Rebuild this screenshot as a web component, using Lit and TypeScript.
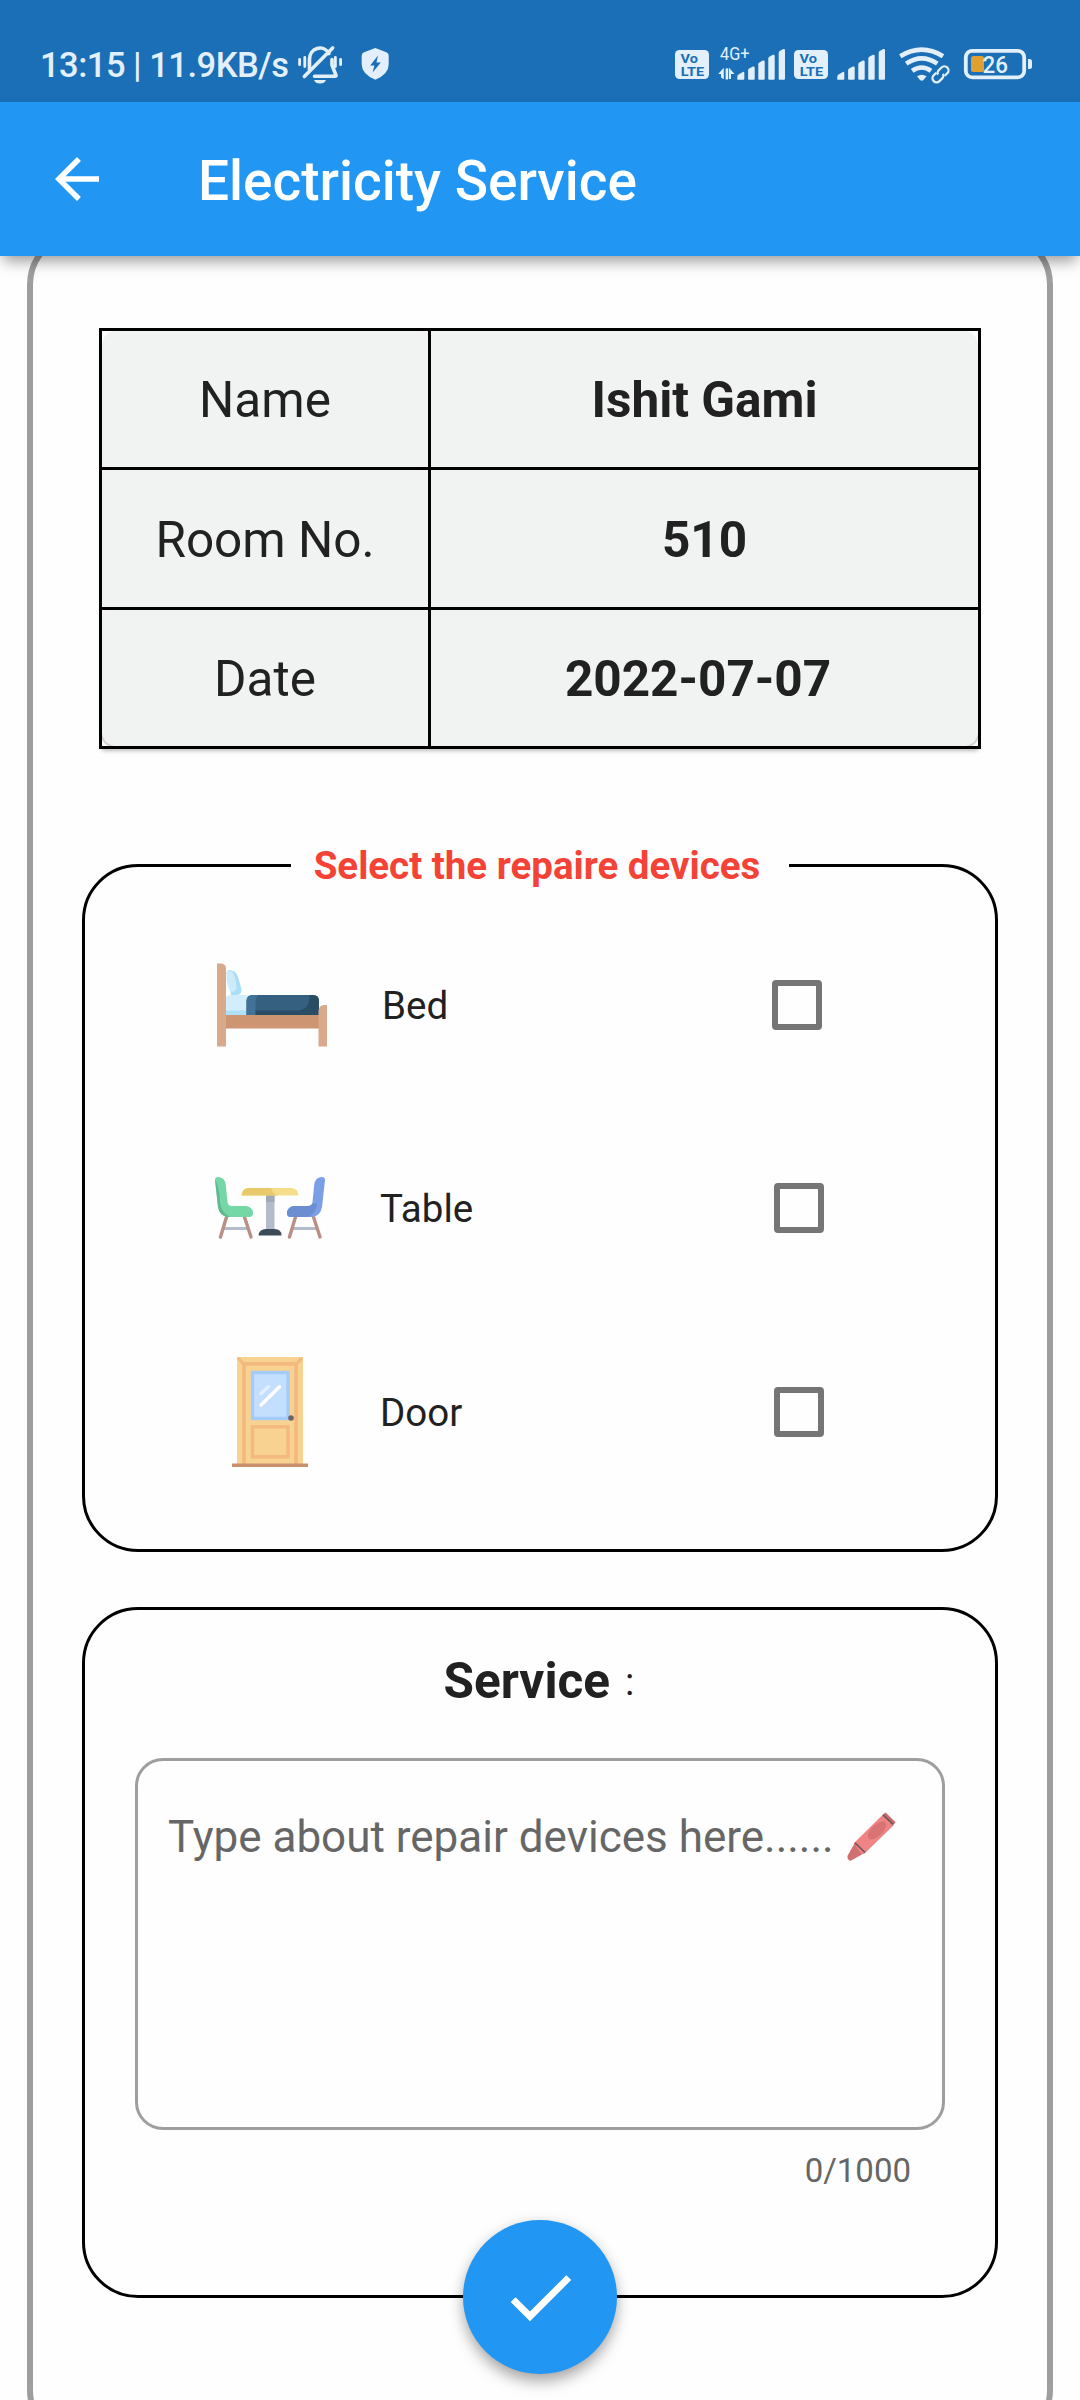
import { LitElement, html, css, svg, type TemplateResult } from "lit";
import { customElement, property } from "lit/decorators.js";

const bars = (x: number) => svg`
  <g fill="#e3effa" transform="translate(${x} 0)">
    <path d="M0 79.7V76.2Q0.4 74.8 1.6 74.2L5.6 71.9Q7 71.4 7 73V78.7Q7 79.7 6 79.7Z"/>
    <path d="M10.8 79V70Q10.8 69 11.8 68.4L15.6 66.5Q17.4 66 17.4 67.8V78.7Q17.4 79.7 16.4 79.7H11.6Q10.8 79.7 10.8 79Z"/>
    <path d="M21 79V64.3Q21 63.2 22 62.5L25.6 60.5Q27.4 60 27.4 61.8V78.7Q27.4 79.7 26.4 79.7H21.8Q21 79.7 21 79Z"/>
    <path d="M31 79V58.6Q31 57.5 32 56.8L35.6 54.8Q37.4 54.3 37.4 56V78.7Q37.4 79.7 36.4 79.7H31.8Q31 79.7 31 79Z"/>
    <path d="M41.4 79V52.9Q41.4 51.8 42.4 51.1L46 49.1Q47.7 48.6 47.7 50.3V78.7Q47.7 79.7 46.7 79.7H42.2Q41.4 79.7 41.4 79Z"/>
  </g>`;

const volte = (x: number) => svg`
  <g transform="translate(${x} 0)">
    <rect x="0" y="50" width="34" height="29" rx="4.5" fill="#e3effa"/>
    <text class="volte" x="5.6" y="63.2" textLength="17.4" lengthAdjust="spacingAndGlyphs">Vo</text>
    <text class="volte" x="5.8" y="75.6" textLength="23.4" lengthAdjust="spacingAndGlyphs">LTE</text>
  </g>`;

@customElement("status-bar")
export class StatusBar extends LitElement {
  static styles = css`
    :host {
      display: flex;
      align-items: center;
      height: 102px;
      background: #1a6fb6;
      color: #e3effa;
      font-family: Roboto, "Liberation Sans", sans-serif;
    }
    .clock {
      margin-left: 40px;
      width: 256px;
      font-size: 34.5px;
      font-weight: 500;
      line-height: 40px;
      letter-spacing: -0.5px;
      padding-top: 28px;
      white-space: nowrap;
    }
    svg { display: block; height: 102px; }
    .left { width: 100px; }
    .right { width: 420px; margin-left: auto; }
    .volte { font: 700 13px Roboto, "Liberation Sans", sans-serif; fill: #1a6fb6; }
    .net { font: 400 17.5px Roboto, "Liberation Sans", sans-serif; fill: #e3effa; }
    .level { font: 500 23.5px Roboto, "Liberation Sans", sans-serif; fill: #e3effa; }
  `;

  render() {
    return html`
      <span class="clock">13:15 | 11.9KB/s</span>
      <svg class="left" viewBox="296 0 100 102" fill="none" stroke="#e3effa" stroke-linecap="round">
        <path d="M309.5 70V59.5A10.5 11.2 0 0 1 329 53.5" stroke-width="3.6"/>
        <path d="M332 59.5V65L336 75.4Q336.2 76.2 335.2 76.2H314.5" stroke-width="3.6" stroke-linejoin="round"/>
        <path d="M304.3 76.5L332.6 47.9" stroke-width="3.6"/>
        <path d="M299.6 59.3V64.7M304.8 57.4V66.6M340.6 59.3V64.7M335.4 57.4V66.6" stroke-width="2.8"/>
        <path d="M314 80H326Q324.5 83.6 320 83.6Q315.5 83.6 314 80Z" fill="#e3effa" stroke="none"/>
        <path d="M375.3 48L386.3 52.3Q388.7 53.2 388.7 55.5V64.5Q388.7 74 375.3 79.8Q361.7 74 361.7 64.5V55.5Q361.7 53.2 364.1 52.3Z" fill="#e3effa" stroke="none"/>
        <path d="M378 55.5L370.2 65.6H374.4L372.6 72.4L380.8 62.6H376.4Z" fill="#1a6fb6" stroke="none"/>
      </svg>
      <svg class="right" viewBox="660 0 420 102" fill="none">
        ${volte(675)}
        <text class="net" x="720" y="59.6" textLength="29.5" lengthAdjust="spacingAndGlyphs">4G+</text>
        <path d="M718.2 74L723.8 67.8V79.2L721 77.5V74ZM725.6 68.5L728 68.3V79.5H725.6ZM728.8 67.5V79H731V74H734.5Z" fill="#e3effa"/>
        ${bars(737.3)}
        ${volte(794)}
        ${bars(837.3)}
        <g stroke="#e3effa" stroke-width="4.6">
          <path d="M900.3 56.2Q921.8 43.2 943 56.2"/>
          <path d="M906.2 63.6Q921.8 53 937.3 63.6"/>
          <path d="M912.2 70.8Q921.8 64.2 931 70.8"/>
        </g>
        <path d="M917 76.2Q921.8 73.2 926.6 76.2L923.5 80Q921.8 81.6 920 80Z" fill="#e3effa"/>
        <g stroke="#1a6fb6" stroke-width="6"><path d="M933.5 76L947 71"/></g>
        <g stroke="#e3effa" stroke-width="2.3" transform="rotate(-45 940.5 74.3)">
          <path d="M938.5 70.2H935A4.1 4.1 0 0 0 935 78.4H939.5Q942 78 942.5 75.8"/>
          <path d="M942.5 78.4H946A4.1 4.1 0 0 0 946 70.2H941.5Q939 70.6 938.5 72.8"/>
        </g>
        <rect x="965.8" y="50.8" width="58.4" height="26.6" rx="6.5" stroke="#e3effa" stroke-width="3.8"/>
        <rect x="971" y="56" width="13" height="16" rx="2.5" fill="#e0a030"/>
        <path d="M1028 59H1029.5Q1032 59 1032 61.5V66.5Q1032 69 1029.5 69H1028Z" fill="#e3effa"/>
        <text class="level" x="982.5" y="72.6" textLength="25.5" lengthAdjust="spacingAndGlyphs">26</text>
      </svg>
    `;
  }
}

const bedIcon = html`
  <svg class="art" viewBox="0 0 110 110">
    <path d="M9.5 24Q10 19.5 14 20.2Q19 21 21 27L24.5 39Q25 44.5 20 45H14Q11.5 30 9.5 24Z" fill="#a9dff5"/>
    <path d="M9.5 22Q15.5 19 17.5 26L19.5 35Q20.5 41 15 42Q11 40 9.5 30Z" fill="#cdebfa"/>
    <path d="M8 48Q10 45 14 45H40V65H8Z" fill="#d3eefb"/>
    <path d="M8 60.5H32V65H8Z" fill="#aee0f6"/>
    <path d="M29.5 65V51Q29.5 45 36 45H96Q102 45 102 51V65Z" fill="#36607f"/>
    <path d="M29.5 65V51Q29.5 45 36 45H41Q38.5 48 38.5 52V65Z" fill="#427297"/>
    <path d="M92.5 45H96Q102 45 102 51V65H38.5V60.5H80Q92.5 60 92.5 47Z" fill="#2a4d66"/>
    <path d="M8 65H102V78.5H8Z" fill="#cd9571"/>
    <path d="M0 13.5H3.5Q9 13.5 9 19V96.5H0Z" fill="#d9a98b"/>
    <path d="M101.5 61Q102 55 107 55H110V96.5H101.5Z" fill="#d9a98b"/>
  </svg>`;

const tableIcon = html`
  <svg class="art" viewBox="0 0 110 110">
    <path d="M9 75.5H34M78 75.5H102" stroke="#b4bccb" stroke-width="3.2"/>
    <path d="M11.5 64L5.5 84M29.5 64L36 84M80.5 64L74.5 84M98.5 64L105 84" stroke="#b89086" stroke-width="3.4" stroke-linecap="round"/>
    <path d="M0 27Q0 24 3.5 24Q10 24.5 10.8 32L12.5 49Q13 53 17 53H31Q38 54 38 60.5Q38 64 34 64H13Q4.5 63 3 54Z" fill="#75d6a6"/>
    <path d="M0 26Q5 36 5 49Q6 59 15 64H13Q4.5 63 3 54Z" fill="#62b991"/>
    <path d="M110 27Q110 24 106.5 24Q100 24.5 99.2 32L97.5 49Q97 53 93 53H79Q72 54 72 60.5Q72 64 76 64H97Q105.5 63 107 54Z" fill="#7b9ee6"/>
    <path d="M79 53H93Q96.5 53 97.3 50.5H102Q101 61 93 64H76Q72 64 72 60.5Q72 54 79 53Z" fill="#6c8dd0"/>
    <path d="M51 42H59.5V78H51Z" fill="#b4bccb"/>
    <path d="M51 42H59.5V49H51Z" fill="#a0a9ba"/>
    <path d="M26.5 42.5Q27 35 34 35H76Q83 35 83.5 42.5Z" fill="#f5dd8b"/>
    <path d="M26.5 42.5Q27 35 34 35H56Q58 41 63 42.5Z" fill="#e8ca6c"/>
    <path d="M43.5 82.5Q44 76 51 76H59.5Q66.5 76 66.5 82.5Z" fill="#3c4b58"/>
  </svg>`;

const doorIcon = html`
  <svg class="art" viewBox="0 0 110 110">
    <path d="M22 0H88V107H22Z" fill="#f8d291"/>
    <path d="M23 1L28.5 6.8H81.5L87 1" fill="none" stroke="#f3b980" stroke-width="3.2"/>
    <path d="M29 107V6.8H81V107" fill="none" stroke="#f3b980" stroke-width="3.6"/>
    <rect x="37.5" y="15.5" width="35.5" height="46" fill="#c4defe" stroke="#a5cbf8" stroke-width="3.4"/>
    <path d="M46 48L64.5 29.8" stroke="#ffffff" stroke-width="3.4" stroke-linecap="round"/>
    <path d="M46 36.5L53.5 29.5" stroke="#e2efff" stroke-width="3.4" stroke-linecap="round"/>
    <rect x="37.5" y="69.8" width="35.5" height="30" fill="#f8d291" stroke="#f3b980" stroke-width="3.4"/>
    <circle cx="76" cy="61" r="2.8" fill="#6d6468"/>
    <path d="M17 106.5H93V110H17Z" fill="#ca8f6d"/>
  </svg>`;

const crayon = html`
  <svg class="crayon" viewBox="0 0 50 50">
    <path d="M8 30.5L0.7 43.5Q-0.3 47 2.5 48.5Q4 49 6 47.5L18 40.8Z" fill="#d27070"/>
    <path d="M7 31L36 2.5L47 13L17.5 41.5Q15 42.5 13.5 41Z" fill="#f08484"/>
    <path d="M36 2.5L38.6 0.5L48.6 10.2L46.5 12.8Z" fill="#c66a6c"/>
    <ellipse cx="30" cy="18.5" rx="11.6" ry="5.6" transform="rotate(-44 30 18.5)" fill="#d87474"/>
    <path d="M36 2.8L46 12.3M8 30.8L18 40.5" stroke="#70575b" stroke-width="1.7"/>
  </svg>`;

interface Device {
  name: string;
  icon: TemplateResult;
}

@customElement("device-row")
export class DeviceRow extends LitElement {
  static styles = css`
    :host {
      display: flex;
      align-items: center;
      height: 203.5px;
      font-family: Roboto, "Liberation Sans", sans-serif;
    }
    .art { display: block; width: 110px; height: 110px; flex: none; }
    .label {
      flex: 1;
      padding: 2px 0 0 55px;
      font-size: 38.5px;
      line-height: 46px;
      color: #212121;
    }
    .box {
      box-sizing: border-box;
      width: 50px;
      height: 50px;
      border: 6px solid #757575;
      border-radius: 4px;
    }
  `;

  @property({ attribute: false }) device!: Device;

  render() {
    return html`${this.device.icon}
      <span class="label">${this.device.name}</span>
      <span class="box" role="checkbox" aria-checked="false"></span>`;
  }
}

@customElement("app-root")
export class AppRoot extends LitElement {
  static styles = css`
    :host {
      display: block;
      font-family: Roboto, "Liberation Sans", sans-serif;
      color: #212121;
    }
    .screen {
      position: relative;
      display: flex;
      flex-direction: column;
      width: 1080px;
      height: 2400px;
      overflow: hidden;
      background: #fefefe;
    }
    .appbar {
      display: flex;
      align-items: center;
      box-sizing: border-box;
      height: 154px;
      padding-left: 44px;
      background: #2196f3;
      box-shadow: 0 8px 14px -3px rgba(0, 0, 0, 0.4);
      z-index: 1;
    }
    .back { width: 66px; height: 66px; fill: #fff; }
    .title {
      margin: 4px 0 0 88px;
      font-size: 55px;
      font-weight: 500;
      line-height: 64px;
      color: #fff;
    }
    .content { flex: 1; min-height: 0; padding: 0 27px; overflow: hidden; }
    .sheet {
      box-sizing: border-box;
      height: 2215px;
      margin-top: -26px;
      padding: 92px 49px 0;
      border: 6px solid #9e9e9e;
      border-radius: 55px;
    }
    .info {
      display: grid;
      grid-template-columns: 326px 547px;
      grid-template-rows: 136px 137px 136px;
      gap: 3px;
      box-sizing: border-box;
      width: 882px;
      height: 421px;
      margin: 0 17px;
      border: 3px solid #000;
      background: #000;
      box-shadow: 0 5px 4px -3px rgba(0, 0, 0, 0.25);
    }
    .cell {
      display: flex;
      align-items: center;
      justify-content: center;
      box-sizing: border-box;
      padding-top: 2px;
      background: #f1f3f2;
      font-size: 49.5px;
    }
    .strong { font-weight: 700; }
    .date { padding-right: 13px; }
    .tl { background: radial-gradient(circle at 14px 14px, #f1f3f2 13.5px, #fff 14.5px) 0 0 / 14px 14px no-repeat, #f1f3f2; }
    .tr { background: radial-gradient(circle at 0 14px, #f1f3f2 13.5px, #fff 14.5px) 100% 0 / 14px 14px no-repeat, #f1f3f2; }
    .bl { background: radial-gradient(circle at 14px 0, #f1f3f2 13.5px, #c9c9c9 14.5px, #fff 17px) 0 100% / 14px 14px no-repeat, #f1f3f2; }
    .br { background: radial-gradient(circle at 0 0, #f1f3f2 13.5px, #c9c9c9 14.5px, #fff 17px) 100% 100% / 14px 14px no-repeat, #f1f3f2; }
    .panel {
      box-sizing: border-box;
      border: 3px solid #000;
      border-radius: 56px;
    }
    .devices { height: 688px; margin-top: 115px; }
    .legend {
      box-sizing: border-box;
      width: 498px;
      margin: -25px auto 0;
      padding-right: 6px;
      background: #fefefe;
      color: #f44336;
      font-size: 38.5px;
      font-weight: 700;
      line-height: 48px;
      text-align: center;
      white-space: nowrap;
    }
    .rows { padding: 13px 171px 0 130px; }
    .first { margin: 0 2px; }
    .service { height: 691px; margin-top: 55px; padding: 41px 50px 0; }
    .heading {
      display: flex;
      align-items: center;
      justify-content: center;
      height: 60px;
      padding-right: 2px;
      font-size: 49.5px;
      font-weight: 700;
    }
    .colon { margin-left: 15px; font-size: 38.5px; font-weight: 400; }
    .field {
      display: flex;
      box-sizing: border-box;
      height: 372px;
      margin-top: 47px;
      padding: 46px 30px;
      border: 3px solid #9e9e9e;
      border-radius: 28px;
      color: #666;
      font-size: 44px;
      line-height: 60px;
      white-space: nowrap;
    }
    .hint { width: 679px; }
    .crayon { width: 50px; height: 50px; margin-top: 5px; }
    .counter {
      margin-top: 22px;
      padding-right: 34px;
      text-align: right;
      font-size: 33px;
      line-height: 38px;
      color: #666;
    }
    .fab {
      position: absolute;
      left: 463px;
      top: 2220px;
      display: flex;
      align-items: center;
      justify-content: center;
      width: 154px;
      height: 154px;
      border-radius: 50%;
      background: #2196f3;
      box-shadow: 0 10px 16px -2px rgba(0, 0, 0, 0.28), 0 2px 14px rgba(0, 0, 0, 0.14);
    }
    .check { width: 82.5px; height: 82.5px; fill: #fff; }
  `;

  private devices: Device[] = [
    { name: "Bed", icon: bedIcon },
    { name: "Table", icon: tableIcon },
    { name: "Door", icon: doorIcon },
  ];

  render() {
    return html`
      <div class="screen">
        <status-bar></status-bar>
        <header class="appbar">
          <svg class="back" viewBox="0 0 24 24"><path d="M20 11H7.83l5.59-5.59L12 4l-8 8 8 8 1.41-1.41L7.83 13H20v-2z"/></svg>
          <span class="title">Electricity Service</span>
        </header>
        <main class="content">
          <div class="sheet">
            <div class="info">
              <div class="cell tl">Name</div>
              <div class="cell strong tr">Ishit Gami</div>
              <div class="cell">Room No.</div>
              <div class="cell strong">510</div>
              <div class="cell bl">Date</div>
              <div class="cell strong date br">2022-07-07</div>
            </div>
            <section class="panel devices">
              <div class="legend">Select the repaire devices</div>
              <div class="rows">
                ${this.devices.map((d, i) => html`<device-row class=${i === 0 ? "first" : ""} .device=${d}></device-row>`)}
              </div>
            </section>
            <section class="panel service">
              <div class="heading"><span>Service</span><span class="colon">:</span></div>
              <div class="field">
                <span class="hint">Type about repair devices here......</span>
                ${crayon}
              </div>
              <div class="counter">0/1000</div>
            </section>
          </div>
        </main>
        <div class="fab" role="button" aria-label="Submit">
          <svg class="check" viewBox="0 0 24 24"><path d="M9 16.17L4.83 12l-1.42 1.41L9 19 21 7l-1.41-1.41z"/></svg>
        </div>
      </div>
    `;
  }
}
